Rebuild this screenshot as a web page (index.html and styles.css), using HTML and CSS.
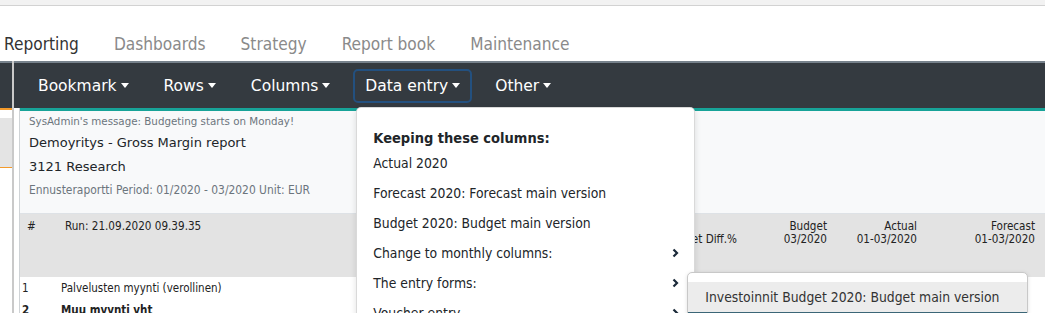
FILE: index.html
```html
<!DOCTYPE html>
<html lang="en">
<head>
    <meta charset="UTF-8">
    <meta name="viewport" content="width=device-width, initial-scale=1.0">
    <title>Reporting</title>
    <link rel="stylesheet" href="styles.css">
</head>
<body>
    <div class="topbar"></div>

    <nav class="tabs">
        <a class="tab active">Reporting</a>
        <a class="tab">Dashboards</a>
        <a class="tab">Strategy</a>
        <a class="tab">Report book</a>
        <a class="tab">Maintenance</a>
    </nav>

    <div class="workspace">
        <!-- collapsed left pane -->
        <div class="side-pane">
            <div class="side-head"></div>
            <div class="side-gap"></div>
            <div class="side-band"></div>
        </div>
        <div class="splitter"></div>

        <div class="main-pane">
            <div class="toolbar">
                <div class="tool">Bookmark<span class="caret"></span></div>
                <div class="tool">Rows<span class="caret"></span></div>
                <div class="tool">Columns<span class="caret"></span></div>
                <div class="tool open">Data entry<span class="caret"></span>
                    <div class="dropdown">
                        <div class="menu-label">Keeping these columns:</div>
                        <div class="menu-item">Actual 2020</div>
                        <div class="menu-item">Forecast 2020: Forecast main version</div>
                        <div class="menu-item">Budget 2020: Budget main version</div>
                        <div class="menu-item">Change to monthly columns:
                            <svg class="chevron" viewBox="0 0 7 10"><polyline points="1.5,1.5 5,5 1.5,8.5"/></svg>
                        </div>
                        <div class="menu-item">The entry forms:
                            <svg class="chevron" viewBox="0 0 7 10"><polyline points="1.5,1.5 5,5 1.5,8.5"/></svg>
                            <div class="submenu">
                                <div class="submenu-item active">Investoinnit Budget 2020: Budget main version</div>
                            </div>
                        </div>
                        <div class="menu-item">Voucher entry
                            <svg class="chevron" viewBox="0 0 7 10"><polyline points="1.5,1.5 5,5 1.5,8.5"/></svg>
                        </div>
                    </div>
                </div>
                <div class="tool">Other<span class="caret"></span></div>
            </div>

            <div class="report-wrap">
                <div class="report">
                    <div class="report-info">
                        <div class="msg">SysAdmin's message: Budgeting starts on Monday!</div>
                        <div class="title">Demoyritys - Gross Margin report</div>
                        <div class="unit">3121 Research</div>
                        <div class="period">Ennusteraportti Period: 01/2020 - 03/2020 Unit: EUR</div>
                    </div>

                    <div class="report-head">
                        <div class="hash">#</div>
                        <div class="run">Run: 21.09.2020 09.39.35</div>
                        <div class="cols">
                            <div class="col">&nbsp;<br>Budget Diff.%</div>
                            <div class="col">Budget<br>03/2020</div>
                            <div class="col">Actual<br>01-03/2020</div>
                            <div class="col wide">Forecast<br>01-03/2020</div>
                        </div>
                    </div>

                    <div class="report-row">
                        <div class="num">1</div>
                        <div class="name">Palvelusten myynti (verollinen)</div>
                    </div>
                    <div class="report-row total">
                        <div class="num">2</div>
                        <div class="name">Muu myynti yht</div>
                    </div>
                </div>
            </div>
        </div>
    </div>
</body>
</html>
```

FILE: styles.css
```css
body {
    margin: 0;
    width: 1045px;
    height: 313px;
    overflow: hidden;
    background-color: #ffffff;
    font-family: "DejaVu Sans", sans-serif;
    color: #212529;
}

/* narrow face used for tabs, menus and the grid (Tahoma look) */
.tab,
.dropdown,
.period,
.report-head,
.report-row {
    font-family: "DejaVu Sans Condensed", "DejaVu Sans", sans-serif;
    font-stretch: condensed;
}

.topbar {
    height: 5px;
    background-color: #f2f2f2;
    border-bottom: 1px solid #d2d2d2;
}

/* top level tabs */
.tabs {
    display: flex;
    gap: 35px;
    height: 24px;
    padding: 26px 0 5px 4px;
}
.tab {
    font-size: 17.15px;
    line-height: 24px;
    color: #8a8a8a;
}
.tab.active {
    color: #333333;
}

.workspace {
    display: flex;
    height: 252px;
}

.side-pane {
    width: 12px;
}
.side-head {
    height: 45px;
    background-color: #343a40;
    border-top: 2px solid #77828c;
    border-bottom: 2px solid #f39a2b;
}
.side-gap {
    height: 8px;
}
.side-band {
    height: 49px;
    background-color: #e4e4e4;
    border-bottom: 1px solid #f39a2b;
}
.splitter {
    width: 2px;
    background-color: #c9c9c9;
}

.main-pane {
    flex: 1;
    min-width: 0;
}

/* dark toolbar */
.toolbar {
    display: flex;
    align-items: center;
    height: 45px;
    padding-left: 12px;
    background-color: #343a40;
    border-top: 2px solid #77828c;
}
.tool {
    position: relative;
    padding: 0 10px;
    margin-right: 11px;
    border: 2px solid transparent;
    border-radius: 5px;
    color: #ffffff;
    font-size: 15.5px;
    line-height: 30px;
    white-space: nowrap;
}
.tool.open {
    border-color: #23507f;
}
.caret {
    display: inline-block;
    margin-left: 4px;
    vertical-align: 3px;
    border-top: 5px solid #ffffff;
    border-left: 4.5px solid transparent;
    border-right: 4.5px solid transparent;
}

/* data entry menu */
.dropdown {
    position: absolute;
    left: 1px;
    top: 36px;
    z-index: 10;
    width: 339px;
    height: 240px;
    box-sizing: border-box;
    padding-top: 20px;
    background-color: #ffffff;
    border: 1px solid rgba(0, 0, 0, 0.15);
    border-radius: 5px;
    box-shadow: 0 2px 6px rgba(0, 0, 0, 0.12);
    color: #212529;
    font-size: 13.8px;
    white-space: nowrap;
}
.menu-label {
    padding-left: 16px;
    font-size: 14.5px;
    font-weight: bold;
    line-height: 20px;
}
.menu-item {
    position: relative;
    display: flex;
    align-items: center;
    justify-content: space-between;
    height: 30px;
    padding: 0 15px 0 16px;
}
.chevron {
    width: 7px;
    height: 10px;
    fill: none;
    stroke: #1b2a3a;
    stroke-width: 2.2;
}

.submenu {
    position: absolute;
    left: 330px;
    top: 4px;
    z-index: 11;
    width: 341px;
    height: 60px;
    box-sizing: border-box;
    padding-top: 9px;
    background-color: #ffffff;
    border: 1px solid #c8c8c8;
    border-radius: 5px;
    box-shadow: 0 1px 4px rgba(0, 0, 0, 0.12);
}
.submenu-item {
    padding-left: 17px;
    line-height: 30px;
    color: #333333;
}
.submenu-item.active {
    background-color: #ececec;
    border-bottom: 2px solid #3b6677;
}

/* report */
.report-wrap {
    display: flex;
    padding-left: 5px;
}
.report {
    flex: 1;
    border-left: 1px solid #cfd3d6;
}
.report-info {
    height: 106px;
    box-sizing: border-box;
    padding: 3px 9px 0;
    background-color: #f8f9fa;
    border-top: 3px solid #17a398;
    border-bottom: 1px solid #dee2e6;
}
.msg {
    font-size: 10.3px;
    line-height: 14px;
    color: #6c757d;
}
.title {
    margin-top: 5px;
    font-size: 13px;
    line-height: 20px;
}
.unit {
    margin-top: 4px;
    font-size: 13px;
    line-height: 20px;
}
.period {
    margin-top: 5px;
    font-size: 11.9px;
    line-height: 16px;
    color: #6c757d;
}

.report-head {
    display: flex;
    height: 63px;
    box-sizing: border-box;
    padding-top: 6px;
    background-color: #e3e3e3;
    font-size: 11.6px;
    line-height: 13px;
    color: #222222;
}
.hash {
    width: 38px;
    padding-left: 7px;
}
.run {
    flex: 1;
}
.cols {
    display: flex;
    padding-right: 10px;
}
.col {
    width: 90px;
    text-align: right;
}
.col.wide {
    width: 118px;
}

.report-row {
    display: flex;
    height: 22px;
    font-size: 11.5px;
    line-height: 22px;
    color: #222222;
}
.report-row.total {
    font-weight: bold;
}
.num {
    width: 39px;
    padding-left: 2px;
}
```
